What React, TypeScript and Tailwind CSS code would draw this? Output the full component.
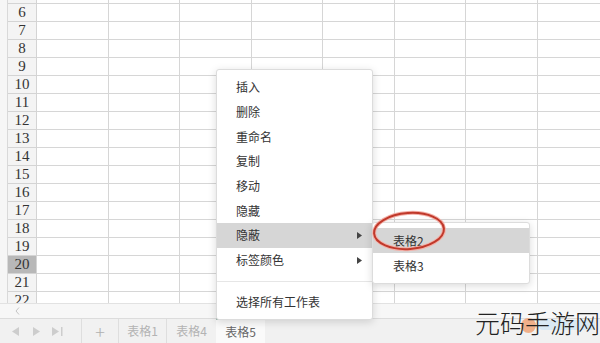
import React from "react";

const rows = [5, 6, 7, 8, 9, 10, 11, 12, 13, 14, 15, 16, 17, 18, 19, 20, 21, 22];
const cols = [0, 1, 2, 3, 4, 5, 6, 7];

const menuItems = ["插入", "删除", "重命名", "复制", "移动", "隐藏", "隐蔽", "标签颜色"];

function Arrow() {
  return (
    <svg width="5" height="7" viewBox="0 0 5 7" className="mr-[10px]">
      <path d="M0 0 L5 3.5 L0 7 Z" fill="#444" />
    </svg>
  );
}

export default function App() {
  return (
    <div
      className="relative h-[343px] w-[600px] overflow-hidden bg-white text-[#333]"
      style={{ fontFamily: '"Noto Sans CJK SC", "Noto Sans", sans-serif' }}
    >
      {/* grid */}
      <div className="flex h-[303px] overflow-hidden">
        <div className="w-[8px] shrink-0 border-r border-[#d9d9d9] bg-[#f6f6f6]" />
        <div className="-mt-[14px] flex flex-1 flex-col">
          {rows.map((r) => (
            <div key={r} className="flex h-[18px] shrink-0">
              <div
                className={`flex w-[29px] shrink-0 items-center justify-center border-b border-r border-[#d4d4d4] text-[15px] leading-none text-[#333] ${
                  r === 20 ? "bg-[#b8b8b8]" : "bg-[#f4f4f4]"
                }`}
                style={{ fontFamily: '"Liberation Serif", serif' }}
              >
                {r}
              </div>
              {cols.map((c) => (
                <div
                  key={c}
                  className="h-[18px] w-[71.5px] shrink-0 border-b border-r border-[#d6d6d6]"
                />
              ))}
            </div>
          ))}
        </div>
      </div>

      {/* horizontal scroll strip */}
      <div className="flex h-[15px] items-center border-t border-[#e2e2e2] bg-[#f7f7f7] pl-[15px]">
        <svg width="5" height="8" viewBox="0 0 5 8">
          <path d="M4 0.5 L1 4 L4 7.5" fill="none" stroke="#c4c4c4" strokeWidth="1" />
        </svg>
      </div>

      {/* sheet tabs */}
      <div className="flex h-[25px] items-stretch border-t border-[#dcdcdc] bg-[#f1f1f1] text-[12px]">
        <div className="flex w-[82px] items-center gap-[12px] border-r border-[#dedede] pl-[12px]">
          <svg width="8" height="9" viewBox="0 0 8 9">
            <path d="M7 0 L0 4.5 L7 9 Z" fill="#cdcdcd" />
          </svg>
          <svg width="8" height="9" viewBox="0 0 8 9">
            <path d="M1 0 L8 4.5 L1 9 Z" fill="#cdcdcd" />
          </svg>
          <svg width="11" height="9" viewBox="0 0 11 9">
            <path d="M0 0 L7 4.5 L0 9 Z" fill="#cdcdcd" />
            <rect x="9" y="0" width="1.5" height="9" fill="#cdcdcd" />
          </svg>
        </div>
        <div className="flex w-[37px] items-center justify-center border-r border-[#dedede] text-[18px] font-light text-[#b0b0b0]">
          +
        </div>
        <div className="flex w-[48px] items-center justify-center border-r border-[#dedede] text-[#b3b3b3]">
          表格1
        </div>
        <div className="flex w-[49px] items-center justify-center text-[#b3b3b3]">表格4</div>
        <div className="-mt-px flex w-[49px] items-center justify-center border-t-2 border-[#a7bfb7] bg-[#fafafa] text-[#666]">
          表格5
        </div>
      </div>

      {/* watermark */}
      <div className="absolute bottom-[8px] right-0 flex items-center">
        <div className="absolute left-[46px] top-[8px] h-[15px] w-[15px] rounded-full bg-[#f0a070] opacity-80" />
        <div className="absolute left-[64px] top-[10px] h-[10px] w-[56px] rounded bg-[#cfe6f3] opacity-70" />
        <span className="relative text-[25px] font-light leading-none text-[#222]">元码手游网</span>
      </div>

      {/* context menu */}
      <div className="absolute left-[216px] top-[69px] w-[157px] rounded-[3px] border border-[#dcdcdc] bg-white py-[5px] text-[12px] text-[#333] shadow-[0_2px_8px_rgba(0,0,0,0.15)]">
        {menuItems.map((m, i) => (
          <div
            key={m}
            className={`flex h-[24.7px] items-center justify-between pl-[19px] ${
              i === 6 ? "bg-[#d6d6d6]" : ""
            }`}
          >
            <span>{m}</span>
            {i >= 6 && <Arrow />}
          </div>
        ))}
        <div className="my-[8px] h-px bg-[#e6e6e6]" />
        <div className="flex h-[24px] items-center pl-[19px]">选择所有工作表</div>
      </div>

      {/* submenu */}
      <div className="absolute left-[372px] top-[222px] w-[158px] rounded-[3px] border border-[#dcdcdc] bg-white py-[5px] text-[12px] text-[#333] shadow-[0_2px_8px_rgba(0,0,0,0.15)]">
        <div className="flex h-[25px] items-center bg-[#d6d6d6] pl-[20px]">表格2</div>
        <div className="flex h-[25px] items-center pl-[20px]">表格3</div>
      </div>

      {/* red hand-drawn circle */}
      <svg className="absolute left-[370px] top-[209px]" width="80" height="45" viewBox="0 0 80 45">
        <ellipse
          cx="39"
          cy="22"
          rx="35"
          ry="18"
          fill="none"
          stroke="#f3b0a8"
          strokeWidth="4"
          transform="rotate(-4 39 22)"
        />
        <ellipse
          cx="39"
          cy="22"
          rx="35"
          ry="18"
          fill="none"
          stroke="#c0392b"
          strokeWidth="2"
          transform="rotate(-4 39 22)"
        />
      </svg>
    </div>
  );
}
